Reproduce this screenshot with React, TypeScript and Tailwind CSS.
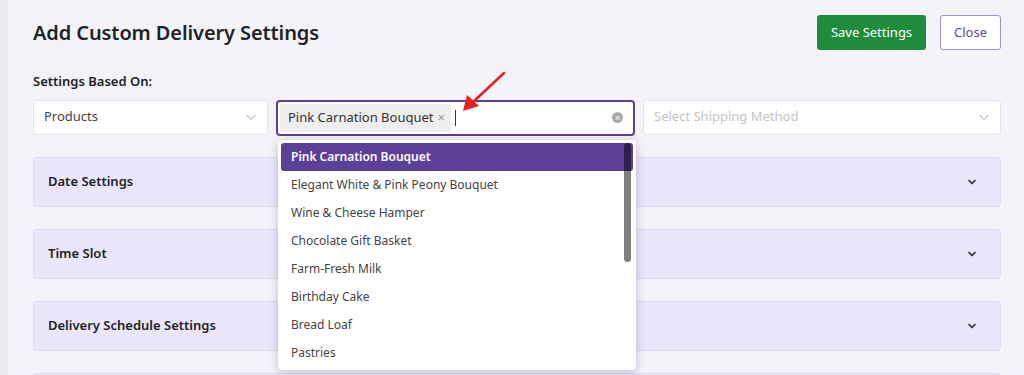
import { ChevronDown } from 'lucide-react'

const products = [
  'Pink Carnation Bouquet',
  'Elegant White & Pink Peony Bouquet',
  'Wine & Cheese Hamper',
  'Chocolate Gift Basket',
  'Farm-Fresh Milk',
  'Birthday Cake',
  'Bread Loaf',
  'Pastries',
]

// last panel is cut off by the viewport; its title isn't visible
const sections = ['Date Settings', 'Time Slot', 'Delivery Schedule Settings', '']

function SelectChevron() {
  return (
    <svg className="w-3 h-3 text-[#c4c4c4]" viewBox="0 0 12 12" fill="none" stroke="currentColor" strokeWidth={1.2}>
      <path d="M1.5 4l4.5 4.5L10.5 4" />
    </svg>
  )
}

export default function App() {
  return (
    <div className="flex h-[375px] w-[1024px] overflow-hidden bg-[#f4f3f9] font-['Noto_Sans',sans-serif] text-[#1d2327]">
      <div className="w-2 shrink-0 bg-[#ececec]" />

      <div className="relative flex-1 pl-[25px] pr-[23px]">
        {/* Header */}
        <div className="flex items-center justify-between pt-[15px]">
          <h1 className="text-[20px] font-semibold tracking-[-0.1px]">Add Custom Delivery Settings</h1>
          <div className="flex gap-[14px]">
            <button className="h-[35px] w-[109px] rounded-[3px] bg-[#1e8c3a] text-[13px] text-white">
              Save Settings
            </button>
            <button className="h-[35px] w-[61px] rounded-[3px] border border-[#9d93d0] bg-white text-[13px] text-[#5b4a9e]">
              Close
            </button>
          </div>
        </div>

        <p className="mt-[22px] text-[13px] font-semibold">Settings Based On:</p>

        {/* Select row */}
        <div className="relative mt-[8px] flex gap-[8px]">
          <div className="flex h-[35px] w-[235px] items-center justify-between rounded-[3px] border border-[#e4e2ea] bg-white pl-[10px] pr-[10px] text-[13px] text-[#444]">
            <span>Products</span>
            <SelectChevron />
          </div>

          <div className="flex h-[36px] w-[359px] items-center rounded-[4px] border-2 border-[#5b3f99] bg-white pl-[2px] pr-[10px]">
            <span className="flex h-[28px] items-center gap-[4px] rounded-[3px] bg-[#eeeeee] pl-[8px] pr-[6px] text-[13px] text-[#333]">
              Pink Carnation Bouquet
              <span className="text-[13px] text-[#999]">×</span>
            </span>
            <span className="ml-[4px] h-[16px] w-px bg-[#333]" />
            <span className="ml-auto flex h-[11px] w-[11px] items-center justify-center rounded-full bg-[#aaa] text-[9px] leading-none text-white">
              ×
            </span>
          </div>

          <div className="flex h-[35px] flex-1 items-center justify-between rounded-[3px] border border-[#e4e2ea] bg-white pl-[10px] pr-[10px] text-[13px] text-[#c4c4c4]">
            <span>Select Shipping Method</span>
            <SelectChevron />
          </div>

          {/* Dropdown list */}
          <div className="absolute left-[245px] top-[40px] z-20 h-[230px] w-[358px] overflow-hidden rounded-[4px] bg-white p-[3px] shadow-[0_2px_10px_rgba(40,20,90,0.25)]">
            <div className="relative">
              {products.map((p, i) => (
                <div
                  key={p}
                  className={
                    i === 0
                      ? 'flex h-[28px] items-center rounded-[3px] bg-[#5b3f99] px-[10px] text-[12px] font-semibold text-white'
                      : 'flex h-[28px] items-center px-[10px] text-[12px] text-[#444]'
                  }
                >
                  {p}
                </div>
              ))}
              <div className="absolute right-[2px] top-0 h-[119px] w-[7px] rounded-full bg-black/50" />
            </div>
          </div>
        </div>

        {/* Accordions */}
        <div className="mt-[21px] flex flex-col gap-[22px]">
          {sections.map((s, i) => (
            <div
              key={i}
              className="flex h-[50px] shrink-0 items-center justify-between rounded-[3px] border border-[#e0dbef] bg-[#ebe6fc] pl-[14px] pr-[22px]"
            >
              <span className="text-[13px] font-semibold">{s}</span>
              <ChevronDown className="h-[12px] w-[12px] text-[#333]" strokeWidth={3.5} />
            </div>
          ))}
        </div>

        {/* Red annotation arrow */}
        <svg className="absolute left-[440px] top-[65px] z-30 h-[55px] w-[70px]" viewBox="0 0 70 55">
          <line x1="56" y1="8" x2="24" y2="38" stroke="#e8201f" strokeWidth={2.5} strokeLinecap="round" />
          <path d="M15 46 L19 30 L31 41 Z" fill="#e8201f" />
        </svg>
      </div>
    </div>
  )
}
